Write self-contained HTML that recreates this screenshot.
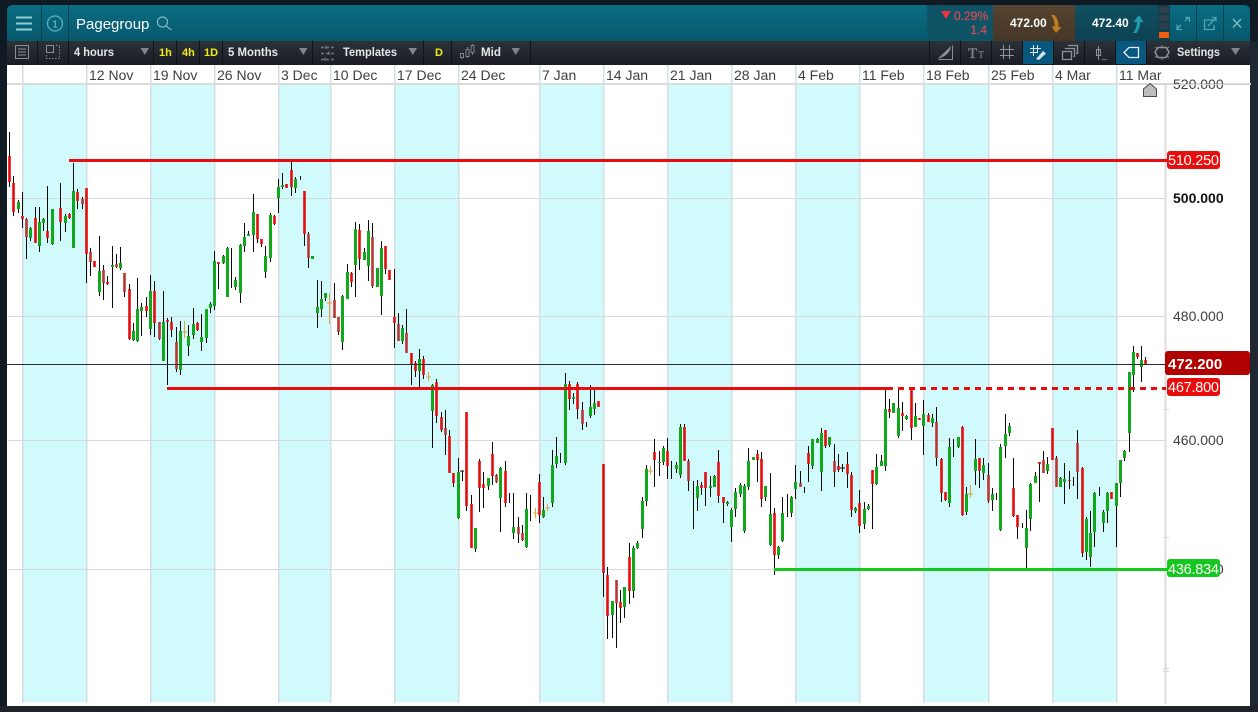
<!DOCTYPE html>
<html><head><meta charset="utf-8"><title>Pagegroup</title>
<style>
html,body{margin:0;padding:0;background:#0f1a22;width:1258px;height:712px;overflow:hidden}
svg{display:block;position:absolute;left:0;top:0}
text{font-family:"Liberation Sans",sans-serif}
</style></head><body>
<svg width="1258" height="712" viewBox="0 0 1258 712" xmlns="http://www.w3.org/2000/svg">
<defs>
<linearGradient id="h" x1="0" y1="0" x2="0" y2="1"><stop offset="0" stop-color="#0a6d82"/><stop offset="1" stop-color="#07586c"/></linearGradient>
<linearGradient id="t" x1="0" y1="0" x2="0" y2="1"><stop offset="0" stop-color="#2d3138"/><stop offset="1" stop-color="#1a1d23"/></linearGradient>
<linearGradient id="s" x1="0" y1="0" x2="0" y2="1"><stop offset="0" stop-color="#574430"/><stop offset="1" stop-color="#463626"/></linearGradient>
<linearGradient id="b" x1="0" y1="0" x2="0" y2="1"><stop offset="0" stop-color="#0f5061"/><stop offset="1" stop-color="#0d4253"/></linearGradient>
</defs>
<rect width="1258" height="712" fill="#0f1a22"/>
<rect x="1250" y="41" width="8" height="671" fill="#1f2831"/>
<rect x="0" y="706" width="1258" height="6" fill="#1e2329"/>
<!-- chart area -->
<rect x="7" y="65" width="1243" height="641" fill="#fff"/>
<g fill="#d0fafc">
<rect x="23" y="84" width="63" height="618"/><rect x="151" y="84" width="63" height="618"/><rect x="279" y="84" width="51" height="618"/><rect x="395" y="84" width="63" height="618"/><rect x="540" y="84" width="64" height="618"/><rect x="668" y="84" width="63" height="618"/><rect x="796" y="84" width="63" height="618"/><rect x="924" y="84" width="64" height="618"/><rect x="1053" y="84" width="63" height="618"/>
</g>
<g fill="#d3dde2">
<rect x="22" y="65" width="1.5" height="638"/><rect x="86" y="65" width="1.5" height="638"/><rect x="150" y="65" width="1.5" height="638"/><rect x="214" y="65" width="1.5" height="638"/><rect x="278" y="65" width="1.5" height="638"/><rect x="330" y="65" width="1.5" height="638"/><rect x="394" y="65" width="1.5" height="638"/><rect x="458" y="65" width="1.5" height="638"/><rect x="539" y="65" width="1.5" height="638"/><rect x="603" y="65" width="1.5" height="638"/><rect x="667" y="65" width="1.5" height="638"/><rect x="731" y="65" width="1.5" height="638"/><rect x="795" y="65" width="1.5" height="638"/><rect x="859" y="65" width="1.5" height="638"/><rect x="923" y="65" width="1.5" height="638"/><rect x="988" y="65" width="1.5" height="638"/><rect x="1052" y="65" width="1.5" height="638"/><rect x="1116" y="65" width="1.5" height="638"/>
</g>
<rect x="7" y="83" width="1244" height="2" fill="#dcdcdc"/>
<g fill="#d9d9d9">
<rect x="8" y="198" width="1158" height="1"/><rect x="8" y="316" width="1158" height="1"/><rect x="8" y="440" width="1158" height="1"/><rect x="8" y="569" width="1158" height="1"/>
<rect x="1163" y="409" width="6" height="1"/><rect x="1163" y="537" width="6" height="1"/><rect x="1163" y="668" width="6" height="1"/><rect x="1163" y="671" width="6" height="1"/>
</g>
<rect x="1164.500" y="84" width="2" height="620" fill="#dcdcdc"/>
<!-- date labels -->
<g font-size="14" fill="#404040">
<text x="89" y="80">12 Nov</text><text x="153" y="80">19 Nov</text><text x="217" y="80">26 Nov</text><text x="281" y="80">3 Dec</text><text x="333" y="80">10 Dec</text><text x="397" y="80">17 Dec</text><text x="461" y="80">24 Dec</text><text x="542" y="80">7 Jan</text><text x="606" y="80">14 Jan</text><text x="670" y="80">21 Jan</text><text x="734" y="80">28 Jan</text><text x="798" y="80">4 Feb</text><text x="862" y="80">11 Feb</text><text x="926" y="80">18 Feb</text><text x="991" y="80">25 Feb</text><text x="1055" y="80">4 Mar</text><text x="1119" y="80">11 Mar</text>
</g>
<!-- axis labels -->
<g font-size="14" fill="#404040">
<text x="1173" y="89">520.000</text>
<text x="1173" y="203" font-weight="700" fill="#111">500.000</text>
<text x="1173" y="321">480.000</text>
<text x="1173" y="445">460.000</text>
<text x="1173" y="574">440.000</text>
</g>
<rect x="1150" y="84" width="100" height="1" fill="#d2d2d2"/>
<path d="M1143.500 96.500V89L1150 83.500L1156.500 89V96.500Z" fill="#bdbdbd" stroke="#4a4a4a"/>
<!-- wicks -->
<path fill="none" stroke="#0a0a0a" stroke-width="1" d="M9.500 132V187M13.500 176V216M18.500 200V213M22.500 192V228M26.500 218V259M30.500 227V241M35.500 207V243M39.500 207V252M43.500 218V231M47.500 186V243M52.500 209V245M60.500 183V241M65.500 214V232M69.500 213V219M73.500 163V248M77.500 189V209M82.500 197V209M86.500 188V283M90.500 248V276M94.500 261V267M99.500 236V296M103.500 265V300M107.500 276V285M112.500 246V308M116.500 254V268M120.500 247V270M124.500 273V297M129.500 284V340M133.500 323V341M137.500 278V342M141.500 303V336M146.500 297V317M150.500 275V335M154.500 281V337M159.500 322V340M163.500 291V361M167.500 318V385M171.500 317V337M176.500 327V372M180.500 321V375M188.500 325V356M193.500 308V339M197.500 322V331M201.500 314V351M206.500 309V343M210.500 302V313M214.500 251V310M218.500 262V289M223.500 255V264M227.500 247V297M231.500 248V288M235.500 277V290M240.500 244V303M244.500 223V252M248.500 231V236M253.500 194V252M257.500 214V243M261.500 239V247M265.500 246V278M270.500 213V262M274.500 215V225M278.500 179V213M282.500 173V189M291.500 162V196M295.500 177V193M300.500 176V180M304.500 191V246M308.500 232V268M317.500 280V328M321.500 281V317M325.500 293V301M334.500 283V318M338.500 317V335M342.500 295V350M347.500 264V299M351.500 272V287M355.500 222V297M359.500 224V270M364.500 248V260M368.500 220V281M372.500 223V288M377.500 268V287M381.500 241V315M385.500 246V274M389.500 270V280M394.500 269V348M398.500 313V341M402.500 325V344M406.500 309V353M411.500 353V385M415.500 361V377M419.500 349V387M423.500 356V379M432.500 384V448M436.500 379V423M441.500 412V432M445.500 410V455M449.500 430V473M453.500 473V487M458.500 458V519M462.500 471V481M460 471H464M466.500 412V511M471.500 495V548M475.500 528V552M479.500 459V512M483.500 472V508M488.500 478V490M492.500 442V485M496.500 474V483M500.500 467V532M505.500 461V507M509.500 493V503M513.500 493V539M518.500 517V543M522.500 525V541M526.500 493V548M530.500 495V521M539.500 474V523M543.500 497V518M552.500 450V507M556.500 437V468M560.500 453V463M565.500 373V465M569.500 381V410M573.500 393V404M577.500 382V419M582.500 402V430M586.500 422V427M590.500 385V418M594.500 389V415M598.500 401V407M603.500 464V597M607.500 567V639M612.500 601V638M616.500 580V648M620.500 590V623M624.500 587V618M629.500 543V604M633.500 546V598M637.500 541V549M642.500 497V538M646.500 465V506M654.500 439V487M659.500 451V476M663.500 446V465M667.500 438V479M671.500 461V479M676.500 462V473M680.500 424V478M684.500 424V461M688.500 459V491M693.500 481V529M697.500 480V511M701.500 482V495M705.500 472V506M710.500 476V497M714.500 475V487M718.500 450V503M723.500 497V523M727.500 501V506M731.500 508V542M735.500 488V517M740.500 483V497M744.500 484V533M748.500 448V490M753.500 457V460M757.500 450V482M761.500 452V507M765.500 486V501M770.500 473V546M774.500 508V575M778.500 546V559M782.500 497V542M787.500 494V517M791.500 496V517M795.500 465V499M800.500 471V487M804.500 487V493M808.500 446V482M812.500 439V469M817.500 438V443M821.500 428V491M825.500 430V448M829.500 437V447M834.500 444V487M838.500 454V472M842.500 464V472M840 468H845M847.500 452V488M851.500 472V517M855.500 507V513M859.500 490V533M864.500 502V529M868.500 504V510M872.500 470V529M876.500 454V485M881.500 455V466M885.500 389V471M889.500 399V418M893.500 403V413M898.500 390V438M902.500 402V431M906.500 415V420M911.500 388V440M915.500 403V427M923.500 400V455M928.500 413V422M932.500 414V427M936.500 407V466M941.500 458V502M945.500 492V501M949.500 438V507M953.500 439V457M958.500 437V448M962.500 426V516M966.500 487V515M975.500 439V485M979.500 458V488M983.500 458V480M988.500 463V503M992.500 488V511M996.500 493V500M1000.500 444V531M1005.500 414V458M1009.500 423V436M1013.500 458V517M1017.500 515V539M1022.500 523V528M1026.500 510V568M1030.500 483V531M1035.500 472V483M1039.500 462V502M1043.500 451V473M1047.500 457V474M1052.500 428V460M1056.500 456V487M1060.500 477V487M1064.500 463V504M1069.500 471V489M1073.500 477V486M1077.500 430V499M1082.500 467V557M1086.500 517V560M1090.500 511V567M1094.500 492V547M1099.500 487V496M1103.500 510V532M1107.500 492V523M1116.500 483V547M1120.500 460V497M1124.500 450V461M1129.500 372V452M1133.500 346V392M1137.500 353V359M1141.500 346V382M1145.500 357V364"/>
<!-- orange dojis -->
<path fill="none" stroke="#d9a441" stroke-width="1" d="M184.500 321V338M182 332H187M329.500 293V324M327 303H332M428.500 372V381M426 377H431M535.500 508V518M533 513H538M547.500 504V511M545 508H550M650.500 466V475M648 471H653M970.500 485V498M968 494H973"/>
<!-- red bodies -->
<path fill="none" stroke="#e50c0c" stroke-width="2.600" d="M9.500 156V182M13.500 183V212M22.500 216V219M35.500 218V243M47.500 231V238M60.500 208V222M69.500 214V218M77.500 192V201M86.500 188V254M94.500 261V267M107.500 282V284M129.500 289V339M146.500 306V311M154.500 291V323M167.500 320V322M171.500 322V330M197.500 323V330M218.500 262V264M257.500 214V239M261.500 239V244M274.500 216V224M286.500 184V188M291.500 170V187M304.500 191V234M351.500 273V282M359.500 230V259M385.500 246V269M389.500 270V280M394.500 317V323M411.500 353V365M415.500 363V371M423.500 359V375M436.500 382V416M441.500 417V430M449.500 436V473M453.500 473V483M466.500 412V506M471.500 504V548M479.500 461V488M483.500 484V488M492.500 454V476M505.500 471V503M539.500 482V515M569.500 384V399M577.500 384V409M598.500 401V407M603.500 464V573M607.500 575V616M620.500 602V608M629.500 557V591M654.500 452V460M667.500 451V466M684.500 427V461M701.500 485V488M705.500 472V488M718.500 462V496M723.500 497V503M757.500 454V460M761.500 459V499M774.500 513V555M808.500 453V464M825.500 430V446M838.500 466V470M847.500 464V474M851.500 475V510M859.500 503V526M872.500 470V484M889.500 409V412M902.500 413V416M911.500 388V428M919.500 418V420M928.500 415V422M941.500 459V493M945.500 492V500M962.500 427V515M979.500 458V471M1013.500 488V516M1017.500 515V527M1039.500 462V464M1052.500 428V460M1069.500 480V481M1082.500 468V553M1111.500 492V499M1137.500 353V357M1145.500 360V364"/>
<path fill="none" stroke="#b93636" stroke-width="2.600" d="M26.500 219V237M82.500 199V204M90.500 252V262M103.500 270V283M116.500 264V267M124.500 273V292M159.500 322V339M176.500 342V369M308.500 234V258M334.500 300V318M338.500 317V332M372.500 237V286M398.500 324V341M406.500 333V353M445.500 428V435M496.500 475V482M518.500 527V534M522.500 533V540M582.500 410V424M616.500 580V603M688.500 461V481M800.500 483V487M834.500 461V472M936.500 422V458M988.500 475V501M1043.500 460V473M1056.500 458V487M1077.500 443V472"/>
<!-- green bodies -->
<path fill="none" stroke="#12a81c" stroke-width="3" d="M18.500 202V209M30.500 228V238M39.500 222V246M43.500 219V223M52.500 209V244M65.500 216V223M73.500 191V248M99.500 271V292M112.500 265V267M120.500 263V268M133.500 331V340M137.500 309V341M141.500 307V311M150.500 291V329M163.500 322V361M180.500 331V370M188.500 336V346M193.500 324V335M201.500 337V342M206.500 309V338M210.500 304V308M214.500 261V306M223.500 256V263M227.500 248V297M235.500 280V287M240.500 245V293M244.500 237V246M248.500 234V236M253.500 212V235M265.500 256V272M270.500 215V258M278.500 187V198M282.500 185V187M295.500 179V188M312.500 256V259M317.500 307V313M321.500 299V309M325.500 293V298M342.500 296V342M347.500 272V299M355.500 229V265M364.500 252V260M368.500 231V266M377.500 268V287M381.500 248V296M402.500 328V341M419.500 359V371M432.500 385V411M458.500 472V518M475.500 528V549M488.500 478V486M500.500 468V498M513.500 527V533M526.500 509V547M543.500 510V517M552.500 465V503M556.500 456V464M565.500 384V463M573.500 397V399M590.500 407V416M594.500 403V409M612.500 601V615M624.500 587V607M633.500 548V591M637.500 543V548M642.500 501V529M646.500 469V501M659.500 462V463M663.500 448V462M676.500 465V469M680.500 427V475M697.500 486V498M710.500 486V488M714.500 476V487M727.500 502V504M731.500 510V527M735.500 492V509M740.500 485V494M744.500 486V531M748.500 461V487M753.500 457V460M765.500 486V497M770.500 514V545M778.500 547V555M782.500 513V541M791.500 497V513M795.500 482V489M812.500 439V466M817.500 439V443M821.500 433V472M829.500 437V445M855.500 508V511M864.500 509V524M868.500 506V509M876.500 467V484M881.500 461V466M885.500 409V466M893.500 403V413M898.500 408V436M906.500 416V419M915.500 416V427M923.500 414V426M932.500 418V423M949.500 447V503M958.500 437V447M966.500 494V512M975.500 459V471M983.500 465V473M992.500 494V500M1000.500 447V530M1005.500 434V446M1009.500 426V433M1026.500 528V548M1030.500 484V519M1035.500 476V483M1047.500 464V471M1060.500 478V487M1064.500 479V482M1086.500 519V552M1090.500 533V557M1094.500 493V532M1103.500 512V523M1107.500 493V511M1116.500 483V506M1120.500 460V483M1124.500 451V458M1129.500 372V433M1133.500 352V375M1141.500 360V367"/>
<!-- horizontal levels -->
<rect x="7" y="364" width="1159" height="1" fill="#2a2f33"/>
<rect x="69" y="159" width="1098" height="3" fill="#e80c0c"/>
<rect x="167" y="387" width="720" height="3" fill="#e80c0c"/>
<path d="M887 388.500H1166" stroke="#e80c0c" stroke-width="3" stroke-dasharray="6 5" fill="none"/>
<rect x="774" y="568" width="393" height="3" fill="#14c81e"/>
<!-- price tags -->
<rect x="1167" y="151" width="53" height="18" rx="3" fill="#e80c0c"/>
<text x="1168" y="165" font-size="14.500" fill="#fff" textLength="51">510.250</text>
<rect x="1165" y="351" width="85" height="24" rx="3" fill="#b00000"/>
<text x="1168" y="369" font-size="15" font-weight="700" fill="#fff">472.200</text>
<rect x="1167" y="378" width="53" height="18" rx="3" fill="#e80c0c"/>
<text x="1168" y="392" font-size="14.500" fill="#fff" textLength="51">467.800</text>
<rect x="1167" y="559" width="53" height="18" rx="3" fill="#14c81e"/>
<text x="1168" y="574" font-size="14.500" fill="#fff" textLength="51">436.834</text>
<!-- header -->
<path d="M7 41V11Q7 5 13 5H1244Q1250 5 1250 11V41Z" fill="url(#h)"/>
<rect x="927" y="5" width="66" height="36" fill="#0f5366"/>
<rect x="993" y="5" width="82" height="36" fill="url(#s)"/>
<rect x="1075" y="5" width="83" height="36" fill="url(#b)"/>
<rect x="1158" y="5" width="12" height="36" fill="#0d3f4d"/>
<g fill="#2f3f4c"><rect x="1159" y="7" width="10" height="6"/><rect x="1159" y="15" width="10" height="6"/><rect x="1159" y="23" width="10" height="6"/></g>
<rect x="1159" y="32" width="10" height="6" fill="#f0600c"/>
<g fill="#04414f"><rect x="41" y="5" width="1" height="36"/><rect x="68" y="5" width="1" height="36"/><rect x="1196" y="5" width="1" height="36"/><rect x="1223" y="5" width="1" height="36"/></g>
<path d="M16 17.500H32M16 23.500H32M16 29.500H32" stroke="#8fd0d6" stroke-width="2" fill="none"/>
<circle cx="55" cy="23.500" r="7.500" fill="none" stroke="#5fb3bf" stroke-width="1.200"/>
<text x="55" y="27.500" font-size="10.500" fill="#7cc6ce" text-anchor="middle">1</text>
<text x="76" y="29" font-size="15" fill="#fff">Pagegroup</text>
<circle cx="162.500" cy="22" r="5" fill="none" stroke="#7db9c4" stroke-width="1.200"/>
<path d="M166 26L171.500 30" stroke="#7db9c4" stroke-width="1.200" fill="none"/>
<path d="M941 11H951L946 19Z" fill="#ef3340"/>
<text x="988" y="20" font-size="12" fill="#d94b52" text-anchor="end" stroke="#d94b52" stroke-width=".2">0.29%</text>
<text x="987" y="34" font-size="12" fill="#d94b52" text-anchor="end" stroke="#d94b52" stroke-width=".2">1.4</text>
<text x="1010" y="27" font-size="12" font-weight="700" fill="#fff">472.00</text>
<path d="M1051 15H1054.500Q1059 20 1058.500 27H1061.500L1056 33L1051.500 26.500H1054.500Q1055 20 1051 15Z" fill="#c07c20"/>
<text x="1092" y="27" font-size="12" font-weight="700" fill="#fff">472.40</text>
<path d="M1133 33H1136.500Q1140 28 1140.500 22H1143.500L1139 15L1133.500 22H1137Q1137 28 1133 33Z" fill="#1f9cac"/>
<g stroke="#4fa7b5" stroke-width="1.300" fill="none">
<path d="M1177 29L1181 25M1185 21L1189 17M1185 17.500H1189.500V22M1177 24.500V29.500H1182"/>
<path d="M1214 20H1204.500V29.500H1214V25M1208 26L1216 18M1212 17.500H1216V21.500"/>
<path d="M1233 19L1241 27.500M1241 19L1233 27.500" stroke="#75bdc7" stroke-width="1.500"/>
</g>
<!-- toolbar -->
<path d="M7 41H1250V65H7Z" fill="url(#t)"/>
<g fill="#101317">
<rect x="37" y="41" width="1" height="24"/><rect x="68" y="41" width="1" height="24"/><rect x="153" y="41" width="1" height="24"/><rect x="176" y="41" width="1" height="24"/><rect x="199" y="41" width="1" height="24"/><rect x="222" y="41" width="1" height="24"/><rect x="312" y="41" width="1" height="24"/><rect x="423" y="41" width="1" height="24"/><rect x="451" y="41" width="1" height="24"/><rect x="530" y="41" width="1" height="24"/><rect x="929" y="41" width="1" height="24"/><rect x="960" y="41" width="1" height="24"/><rect x="991" y="41" width="1" height="24"/><rect x="1022" y="41" width="1" height="24"/><rect x="1053" y="41" width="1" height="24"/><rect x="1084" y="41" width="1" height="24"/><rect x="1115" y="41" width="1" height="24"/><rect x="1146" y="41" width="1" height="24"/>
</g>
<rect x="1023" y="41" width="30" height="23" fill="#07577f"/>
<rect x="1116" y="41" width="30" height="23" fill="#07577f"/>
<path d="M15.500 45.500H28.500V58.500H15.500ZM18 49H26M18 52H26M18 55H26" fill="none" stroke="#8a8f95"/>
<path d="M46.500 45.500H53.500V52.500H46.500Z" fill="none" stroke="#8a8f95"/>
<path d="M46.500 55V58.500H59.500V46M56 45.500H59.500" fill="none" stroke="#8a8f95" stroke-dasharray="1.500 1.500"/>
<g font-size="12" font-weight="700" fill="#e4e6e8">
<text x="74" y="56" textLength="40" lengthAdjust="spacingAndGlyphs">4 hours</text><text x="228" y="56" textLength="50" lengthAdjust="spacingAndGlyphs">5 Months</text><text x="343" y="56" textLength="54" lengthAdjust="spacingAndGlyphs">Templates</text><text x="481" y="56" textLength="20" lengthAdjust="spacingAndGlyphs">Mid</text><text x="1177" y="56" textLength="43" lengthAdjust="spacingAndGlyphs">Settings</text>
</g>
<g font-size="11" font-weight="700" fill="#f2ea10">
<text x="159" y="56">1h</text><text x="182" y="56">4h</text><text x="204" y="56">1D</text><text x="435" y="56">D</text>
</g>
<g fill="#80858b"><path d="M140.500 48H149L144.800 55Z"/><path d="M299 48H307.500L303.300 55Z"/><path d="M408.500 48H417L412.800 55Z"/><path d="M511.500 48H520L515.800 55Z"/><path d="M1231 48H1240L1235.500 55Z"/></g>
<path d="M321 47.500H334M321 53.500H334M321 59.500H334" stroke="#6e7378" stroke-width="1.500" stroke-dasharray="3 2" fill="none"/>
<path d="M326 45.500V49M329 51.500V55M325 57.500V61" stroke="#8a8f95" fill="none"/>
<path d="M460.500 53.500H463.500V57.500H460.500ZM466 49.500H469V56.500H466ZM471 45.500H474V52.500H471ZM462 57.500V59M467.500 47V49.500M467.500 56.500V58M472.500 44V45.500M472.500 52.500V55" fill="none" stroke="#7d8287"/>
<!-- right toolbar icons -->
<path d="M938.500 59.500H952.500V45.500" fill="none" stroke="#8a8f95"/>
<path d="M938 58.500L951 46Q950 55 939 58.500Z" fill="#8a8f95"/>
<text x="968" y="58" font-size="15" fill="#85898f" stroke="#85898f" stroke-width=".3" style="font-family:'Liberation Serif',serif">T</text>
<text x="978" y="58" font-size="10" fill="#85898f" style="font-family:'Liberation Serif',serif">T</text>
<path d="M1003.500 45V59M1009.500 45V59M1000 49.500H1014M1000 55.500H1014" fill="none" stroke="#8f9398"/>
<path d="M1033.500 45V56M1037.500 45V53M1030 48.500H1041M1030 52.500H1037" fill="none" stroke="#dfe6ea"/>
<path d="M1036 59L1043 51L1046 53.500L1039 60Z" fill="#cfe3ea"/>
<path d="M1062.500 51.500H1071.500V59.500H1062.500Z" fill="none" stroke="#8f9398" stroke-width="1.300"/>
<path d="M1065.500 49V48.500H1074.500V56.500H1073.500M1068.500 46V45.500H1077.500V53.500H1076" fill="none" stroke="#8f9398" stroke-width="1.300"/>
<path d="M1098.500 46V60M1096.500 49.500H1100.500V55.500H1096.500Z" fill="#26292f" stroke="#8f9398"/>
<path d="M1102 59.500H1107" stroke="#6e7378" fill="none"/>
<path d="M1124 52.500L1129 47.500H1138.500V57.500H1129Z" fill="none" stroke="#e4eef2" stroke-width="1.300"/>
<path d="M1158 47.500H1166L1169 52L1166 57.500H1158L1155 52Z" fill="none" stroke="#8f9398" stroke-width="1.500"/>
<path d="M1162 45V47M1162 58V60M1155 47L1157 48.500M1167 56L1169 57.500M1155 57.500L1157 56M1167 48.500L1169 47" stroke="#8f9398" fill="none"/>
</svg>
</body></html>
